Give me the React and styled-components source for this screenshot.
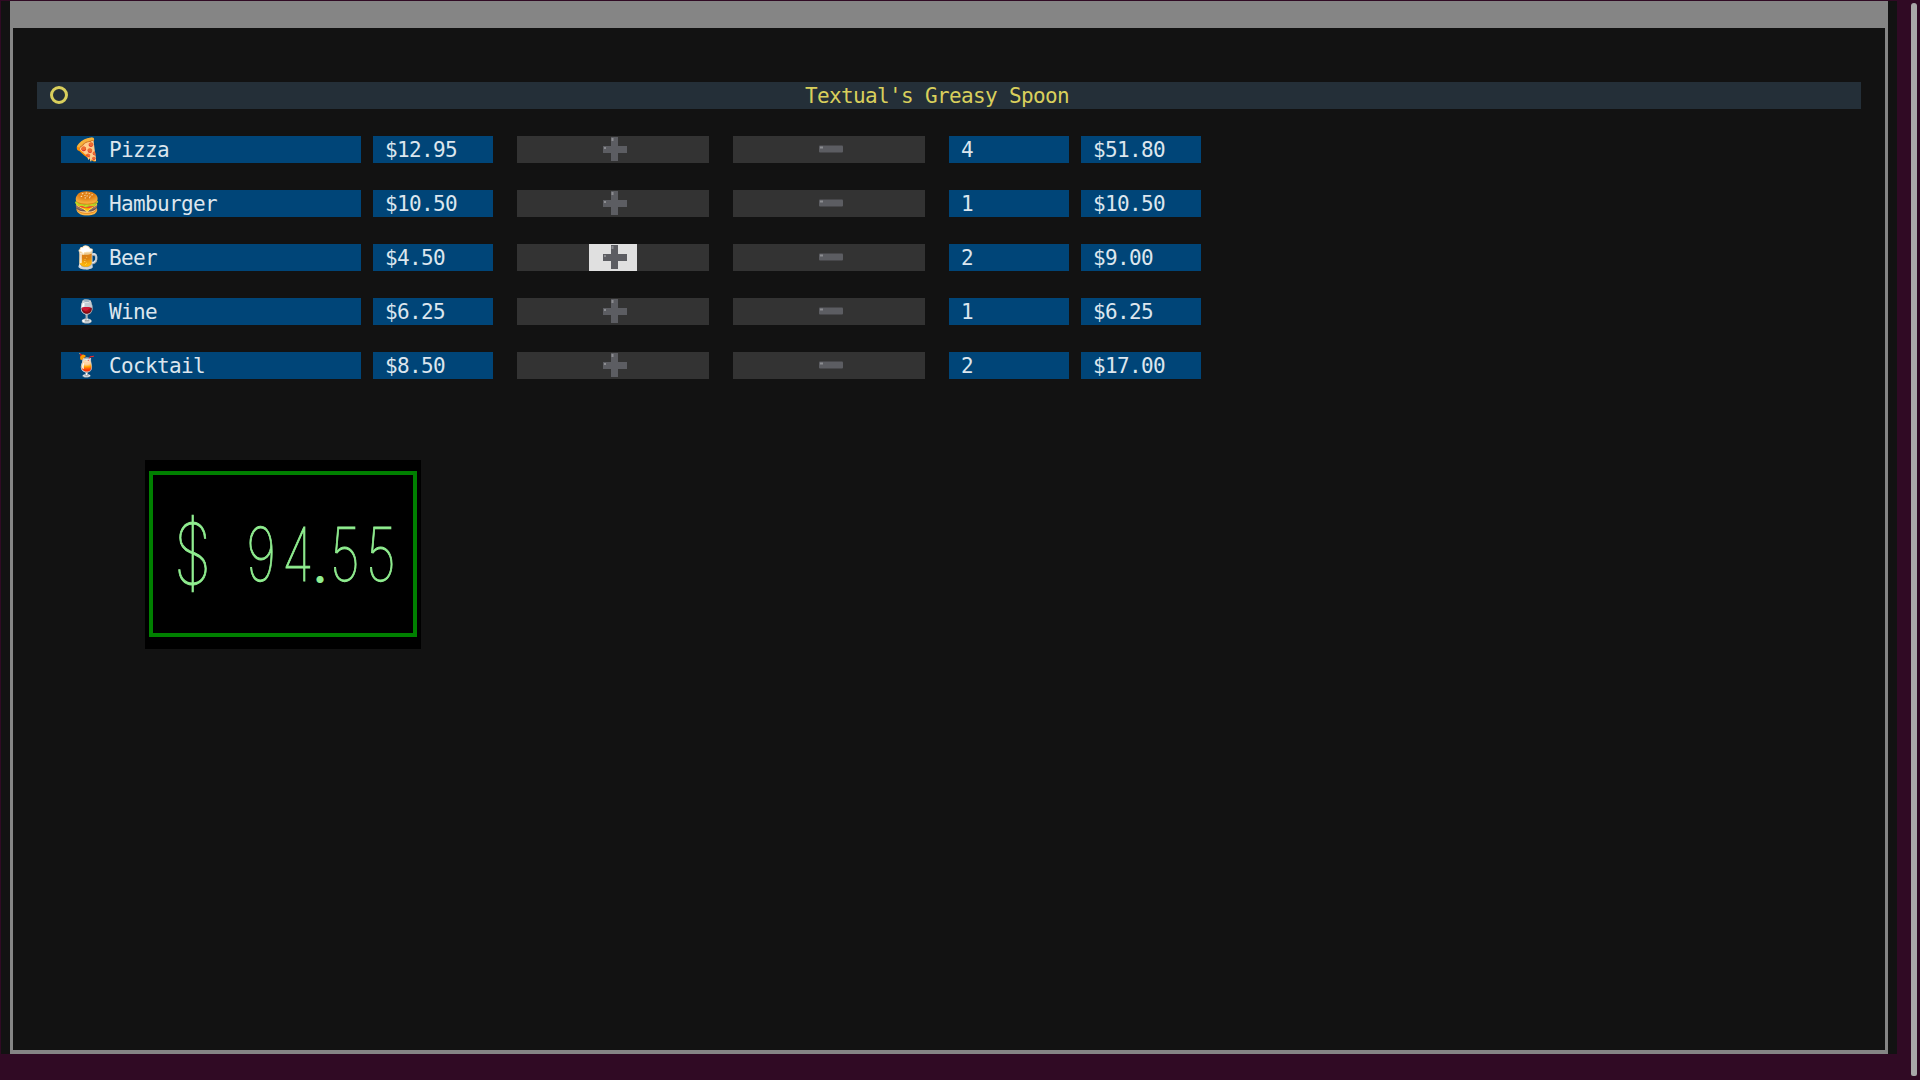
import React from "react";
import styled, { createGlobalStyle } from "styled-components";

const GlobalStyle = createGlobalStyle`
  html, body {
    margin: 0;
    padding: 0;
    width: 1920px;
    height: 1080px;
    overflow: hidden;
    background: #300a24;
  }
`;

const ITEMS = [
  { emoji: "🍕", name: "Pizza", price: "$12.95", qty: 4, total: "$51.80" },
  { emoji: "🍔", name: "Hamburger", price: "$10.50", qty: 1, total: "$10.50" },
  { emoji: "🍺", name: "Beer", price: "$4.50", qty: 2, total: "$9.00", focused: true },
  { emoji: "🍷", name: "Wine", price: "$6.25", qty: 1, total: "$6.25" },
  { emoji: "🍹", name: "Cocktail", price: "$8.50", qty: 2, total: "$17.00" },
];

const Desktop = styled.div`
  display: flex;
  align-items: flex-start;
  height: 1080px;
  font-family: "DejaVu Sans Mono", "Liberation Mono", monospace;
`;

const Terminal = styled.div`
  box-sizing: border-box;
  width: 1896px;
  height: 1053px;
  margin: 1px 0 0 1px;
  padding: 0 9px;
  background: #121212;
`;

const Frame = styled.div`
  box-sizing: border-box;
  height: 100%;
  border: solid #858585;
  border-width: 27px 3px 4px;
  padding-top: 54px;
`;

const Scrollbar = styled.div`
  width: 6px;
  height: 1073px;
  margin: 3px 0 0 14px;
  border-radius: 3px 3px 2px 2px;
  background: #a8a8a8;
`;

const Header = styled.div`
  position: relative;
  display: flex;
  align-items: center;
  justify-content: center;
  box-sizing: border-box;
  height: 27px;
  margin: 0 24px;
  padding: 1px 24px 0 0;
  background: #242f38;
`;

const HeaderIcon = styled.span`
  position: absolute;
  left: 13px;
  top: 4px;
  box-sizing: border-box;
  width: 18px;
  height: 18px;
  border: 3px solid #d9cf5c;
  border-radius: 50%;
`;

const Title = styled.span`
  font-size: 21px;
  letter-spacing: -0.64px;
  line-height: 26px;
  color: #d9cf5c;
`;

const Rows = styled.div`
  display: flex;
  flex-direction: column;
  gap: 27px;
  padding: 27px 48px 0;
`;

const Row = styled.div`
  display: flex;
  height: 27px;
`;

const Cell = styled.div`
  box-sizing: border-box;
  width: ${(p) => p.$width}px;
  margin-left: ${(p) => p.$gap || 0}px;
  padding: 1px 0 0 12px;
  display: flex;
  align-items: center;
  background: #004578;
  color: #dce6ee;
  font-size: 21px;
  letter-spacing: -0.64px;
  line-height: 26px;
  white-space: pre;
`;

const Emoji = styled.span`
  display: inline-flex;
  justify-content: center;
  width: 24px;
  margin: 0 10px 0 2px;
  font-size: 22px;
  letter-spacing: 0;
  font-family: "Noto Color Emoji", sans-serif;
`;

const Track = styled.div`
  display: flex;
  justify-content: center;
  width: 192px;
  margin-left: 24px;
  background: #333333;
`;

const Button = styled.div`
  display: flex;
  align-items: center;
  justify-content: center;
  width: 48px;
  height: 27px;
  background: ${(p) => (p.$focused ? "#e0e0e0" : "transparent")};
`;

const Icon = styled.svg`
  flex: none;
  margin: 0 0 ${(p) => p.$lift || 0}px 3px;
`;

const Lcd = styled.div`
  box-sizing: border-box;
  width: 276px;
  height: 189px;
  margin: 81px 0 0 132px;
  padding: 11px 4px 12px;
  background: #000000;
`;

const LcdFrame = styled.div`
  box-sizing: border-box;
  display: flex;
  align-items: center;
  height: 100%;
  padding-left: 16px;
  border: 4px solid #008000;
  color: #90ee90;
  font-family: "Inter", sans-serif;
  font-weight: 100;
  font-size: 74px;
  line-height: 1;
  -webkit-text-stroke: 1px #90ee90;
`;

const LcdChar = styled.span`
  display: inline-block;
  width: 36px;
  text-align: center;
  font-size: ${(p) => p.$size || 74}px;
  transform: scaleX(0.72);
`;

const LcdDot = styled.span`
  display: inline-block;
  width: 12px;
  text-align: center;
  font-size: 42px;
  font-weight: 700;
  align-self: flex-end;
  margin-bottom: 44px;
  -webkit-text-stroke: 0;
`;

const PlusIcon = () => (
  <Icon width="24" height="24" viewBox="0 0 24 24" $lift={1}>
    <path d="M8 0h7v9h9v7h-9v8H8v-8H0V9h8z" fill="#5c5d62" />
    <path d="M8.5 1h2v3h-2zM1 10h2v2H1z" fill="#8b8c90" />
  </Icon>
);

const MinusIcon = () => (
  <Icon width="24" height="8" viewBox="0 0 24 8" $lift={2}>
    <rect width="24" height="7" y="0.5" rx="1" fill="#5c5d62" />
    <path d="M1 1.5h3v2H1z" fill="#8b8c90" />
  </Icon>
);

export default function App() {
  return (
    <Desktop>
      <GlobalStyle />
      <Terminal>
        <Frame>
          <Header>
            <HeaderIcon />
            <Title>Textual's Greasy Spoon</Title>
          </Header>
          <Rows>
            {ITEMS.map((item) => (
              <Row key={item.name}>
                <Cell $width={300}>
                  <Emoji>{item.emoji}</Emoji>
                  {item.name}
                </Cell>
                <Cell $width={120} $gap={12}>{item.price}</Cell>
                <Track>
                  <Button $focused={item.focused}><PlusIcon /></Button>
                </Track>
                <Track>
                  <Button><MinusIcon /></Button>
                </Track>
                <Cell $width={120} $gap={24}>{item.qty}</Cell>
                <Cell $width={120} $gap={12}>{item.total}</Cell>
              </Row>
            ))}
          </Rows>
          <Lcd>
            <LcdFrame>
              <LcdChar $size={84}>$</LcdChar>
              <LcdChar> </LcdChar>
              <LcdChar>9</LcdChar>
              <LcdChar>4</LcdChar>
              <LcdDot>.</LcdDot>
              <LcdChar>5</LcdChar>
              <LcdChar>5</LcdChar>
            </LcdFrame>
          </Lcd>
        </Frame>
      </Terminal>
      <Scrollbar />
    </Desktop>
  );
}
